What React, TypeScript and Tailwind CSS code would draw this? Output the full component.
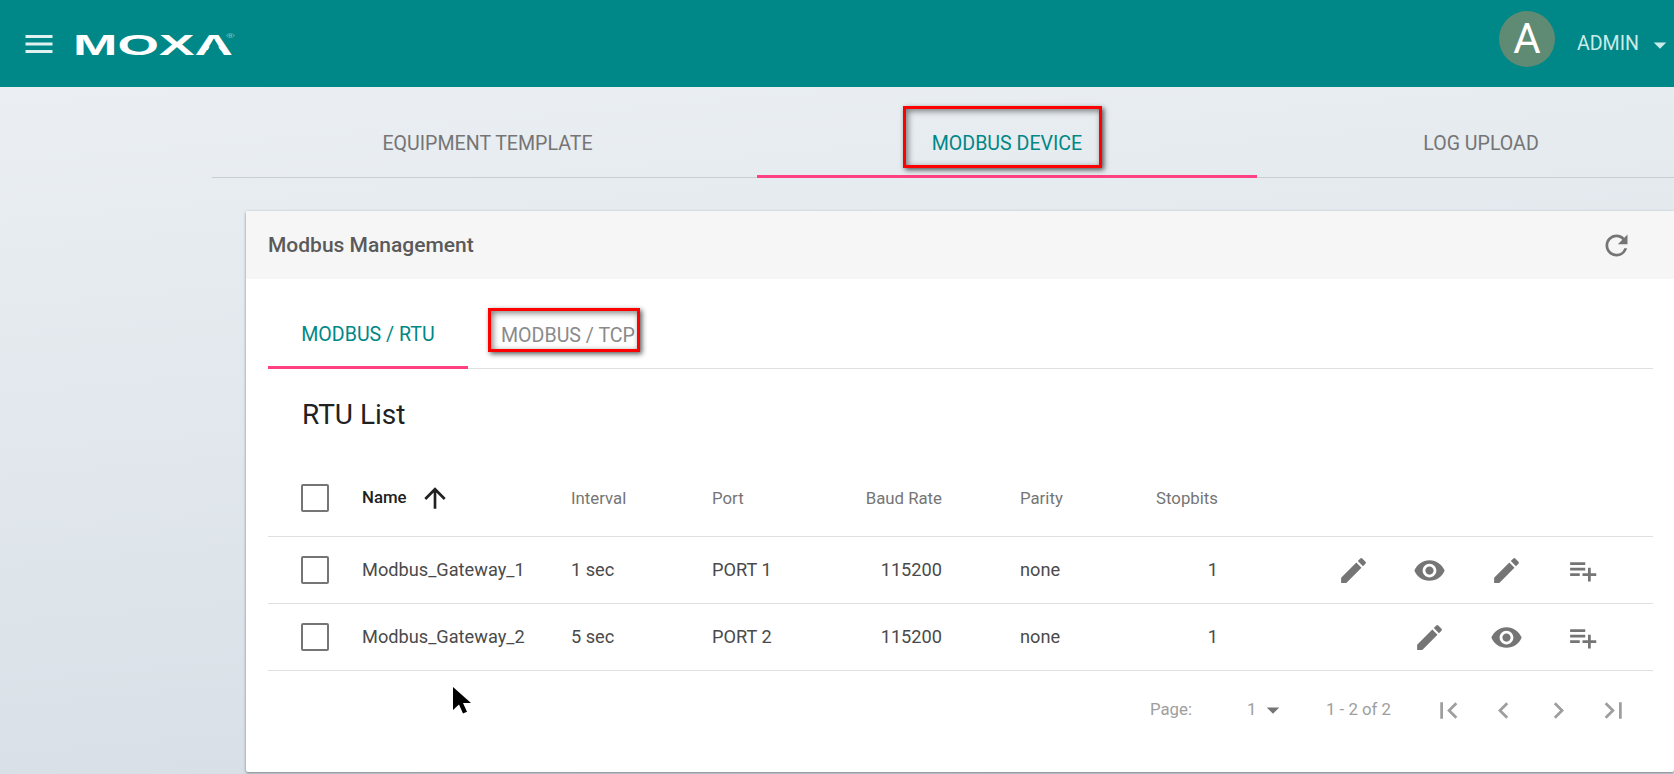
import React from 'react';
import {
  MdMenu, MdArrowDropDown, MdRefresh, MdArrowUpward, MdEdit, MdVisibility, MdPlaylistAdd,
  MdFirstPage, MdChevronLeft, MdChevronRight, MdLastPage,
} from 'react-icons/md';

const Highlight = ({ className }: { className: string }) => (
  <div className={`absolute border-[3px] border-[#ff0000] shadow-[2px_2px_5px_rgba(0,0,0,0.65),inset_2px_2px_6px_rgba(0,0,0,0.5)] pointer-events-none ${className}`} />
);

const Checkbox = () => (
  <div className="ml-[33px] w-[28px] h-[28px] rounded-[2px] border-2 border-[#757575] bg-white" />
);

const cols = 'grid grid-cols-[94px_209px_141px_110px_120px_199px_77px_1fr] items-center';

const rows = [
  { name: 'Modbus_Gateway_1', interval: '1 sec', port: 'PORT 1', extraEdit: true },
  { name: 'Modbus_Gateway_2', interval: '5 sec', port: 'PORT 2', extraEdit: false },
];

const ActionIcon = ({ children }: { children: React.ReactNode }) => (
  <div className="w-[76.5px] flex justify-center text-[#757575]">{children}</div>
);

export default function App() {
  return (
    <div className="h-[774px] w-[1674px] overflow-hidden bg-linear-[175deg] from-[#edf1f4] to-[#d5dde5] font-['Roboto',sans-serif] relative">
      {/* Top bar */}
      <header className="h-[87px] bg-[#008787] flex items-center">
        <MdMenu size={36} className="ml-[21px] text-[#dff1f0]" />
        <svg width="170" height="40" viewBox="0 0 170 40" className="ml-[16px]">
          <text transform="translate(0 30.5) scale(1.84 1)" fontFamily="Liberation Sans" fontWeight="700" fontSize="29" fill="#fff">
            MOXA
            <tspan dx="-3.75" dy="-17" fontSize="6" fontWeight="400" fill="#a9d6d3">®</tspan>
          </text>
          <polygon points="141,15 132,31 150,31" fill="#008787" />
        </svg>
        <div className="ml-auto flex items-center">
          <div className="w-[56px] h-[56px] rounded-full bg-[#5f8a74] flex items-center justify-center text-white text-[42px] leading-none mb-[9px] mr-[22px]">A</div>
          <span className="text-[#c9ebea] text-[19.6px] mr-[6px]">ADMIN</span>
          <MdArrowDropDown size={30} className="text-[#c9ebea] mr-[-1px] mb-[-2px]" />
        </div>
      </header>

      <main className="pl-[212px]">
        {/* Top tabs */}
        <nav className="h-[91px] flex border-b border-[#c9ced2] text-[19.6px] text-[#757575]">
          <div className="w-[545px] pl-[6px] pt-[23px] flex items-center justify-center">EQUIPMENT TEMPLATE</div>
          <div className="relative w-[500px] flex items-center justify-center text-[#008787] border-b-[3px] border-[#ff4081] mb-[-1px] pt-[26px]">
            MODBUS DEVICE
            <Highlight className="left-[146px] top-[19px] w-[199px] h-[62px]" />
          </div>
          <div className="flex-1 pl-[31px] pt-[23px] flex items-center justify-center">LOG UPLOAD</div>
        </nav>

        {/* Card */}
        <section className="mt-[33px] ml-[34px] h-[561px] bg-white rounded-[2px] shadow-[0_1px_3px_rgba(0,0,0,0.45)]">
          <div className="h-[68px] bg-[#f6f6f6] flex items-center justify-between pl-[22px] pr-[41px]">
            <h2 className="text-[21px] font-medium text-[#5a5a5a] pt-[2px]">Modbus Management</h2>
            <MdRefresh size={33} className="text-[#757575]" />
          </div>

          <div className="pl-[22px] pr-[21px]">
            {/* Inner tabs */}
            <div className="h-[90px] flex border-b border-[#e0e0e0] text-[19.6px]">
              <div className="w-[200px] flex items-center justify-center text-[#008787] border-b-[3px] border-[#ff4081] mb-[-1px] pb-[4px] pt-[29px]">MODBUS / RTU</div>
              <div className="relative w-[200px] flex items-center justify-center text-[#8a8a8a] pt-[26px] pb-[3px] mb-[-1px]">
                MODBUS / TCP
                <Highlight className="left-[20px] top-[29px] w-[152px] h-[44px]" />
              </div>
            </div>

            <h3 className="h-[91px] pt-[27px] pl-[34px] text-[28px] leading-[38px] text-[#212121]">RTU List</h3>

            {/* Table */}
            <div className={`${cols} h-[77px] border-b border-[#e0e0e0] text-[16.8px] text-[#757575]`}>
              <Checkbox />
              <div className="flex items-center text-[#212121] font-medium">
                Name
                <MdArrowUpward size={32} className="ml-[12px] text-[#212121]" />
              </div>
              <div className="pt-[2px]">Interval</div>
              <div className="pt-[2px]">Port</div>
              <div className="text-right pt-[2px]">Baud Rate</div>
              <div className="pl-[78px] pt-[2px]">Parity</div>
              <div className="text-right pt-[2px]">Stopbits</div>
              <div />
            </div>
            {rows.map((row) => (
              <div key={row.name} className={`${cols} h-[67px] border-b border-[#e0e0e0] text-[18.2px] text-[#4a4a4a]`}>
                <Checkbox />
                <div>{row.name}</div>
                <div>{row.interval}</div>
                <div>{row.port}</div>
                <div className="text-right">115200</div>
                <div className="pl-[78px]">none</div>
                <div className="text-right">1</div>
                <div className="flex justify-end pr-[32px]">
                  {row.extraEdit && <ActionIcon><MdEdit size={33} /></ActionIcon>}
                  {row.extraEdit && <ActionIcon><MdVisibility size={33} /></ActionIcon>}
                  <ActionIcon><MdEdit size={33} /></ActionIcon>
                  {!row.extraEdit && <ActionIcon><MdVisibility size={33} /></ActionIcon>}
                  <ActionIcon><MdPlaylistAdd size={33} /></ActionIcon>
                </div>
              </div>
            ))}

            {/* Pagination */}
            <div className="h-[78px] flex items-center text-[16.8px] text-[#9e9e9e] pl-[882px]">
              <span className="w-[97px]">Page:</span>
              <span className="w-[11px]">1</span>
              <MdArrowDropDown size={30} className="text-[#757575]" />
              <span className="w-[96px] ml-[37px] pl-[1px]">1 - 2 of 2</span>
              <div className="flex items-center text-[#9e9e9e]">
                <div className="w-[55px] flex justify-center"><MdFirstPage size={33} /></div>
                <div className="w-[55px] flex justify-center"><MdChevronLeft size={33} /></div>
                <div className="w-[55px] flex justify-center"><MdChevronRight size={33} /></div>
                <div className="w-[55px] flex justify-center"><MdLastPage size={33} /></div>
              </div>
            </div>
          </div>
        </section>
      </main>

      {/* Mouse pointer captured in the screenshot */}
      <svg width="22" height="32" viewBox="0 0 22 32" className="absolute left-[452px] top-[686px]">
        <path d="M1 1v23l6-5.5 4 9 4-1.8-4-8.7h8z" fill="#000" />
      </svg>
    </div>
  );
}
